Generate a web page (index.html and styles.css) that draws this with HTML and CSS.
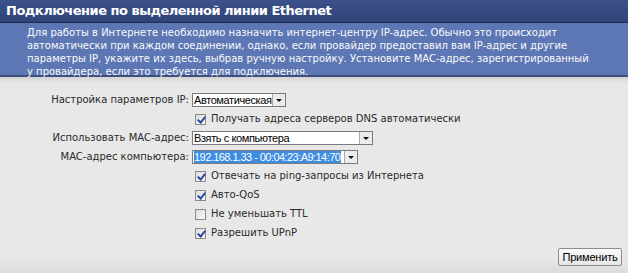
FILE: index.html
```html
<!DOCTYPE html>
<html lang="ru">
<head>
    <meta charset="UTF-8">
    <title>Ethernet</title>
    <link rel="stylesheet" href="styles.css">
</head>
<body>
    <!-- Заголовок страницы -->
    <div class="cabecalho">
        <h1>Подключение по выделенной линии Ethernet</h1>
    </div>

    <!-- Описание -->
    <div class="descricao">
        <p>Для работы в Интернете необходимо назначить интернет-центру IP-адрес. Обычно это происходит<br>
        автоматически при каждом соединении, однако, если провайдер предоставил вам IP-адрес и другие<br>
        параметры IP, укажите их здесь, выбрав ручную настройку. Установите MAC-адрес, зарегистрированный<br>
        у провайдера, если это требуется для подключения.</p>
    </div>

    <!-- Форма настроек -->
    <div class="conteudo">
        <div class="formulario">
            <label class="rotulo">Настройка параметров IP:</label>
            <div class="campo">
                <span class="seletor seletor-ip"><span class="valor">Автоматическая</span><span class="seta"></span></span>
            </div>

            <span></span>
            <label class="opcao"><span class="caixa marcada"></span>Получать адреса серверов DNS автоматически</label>

            <label class="rotulo">Использовать MAC-адрес:</label>
            <div class="campo">
                <span class="seletor seletor-mac"><span class="valor">Взять с компьютера</span><span class="seta"></span></span>
            </div>

            <label class="rotulo">MAC-адрес компьютера:</label>
            <div class="campo">
                <span class="seletor seletor-pc"><span class="valor"><span class="selecionado">192.168.1.33 - 00:04:23:A9:14:70</span></span><span class="seta"></span></span>
            </div>

            <span></span>
            <label class="opcao"><span class="caixa marcada"></span>Отвечать на ping-запросы из Интернета</label>
            <span></span>
            <label class="opcao"><span class="caixa marcada"></span>Авто-QoS</label>
            <span></span>
            <label class="opcao"><span class="caixa"></span>Не уменьшать TTL</label>
            <span></span>
            <label class="opcao"><span class="caixa marcada"></span>Разрешить UPnP</label>
        </div>

        <div class="rodape">
            <button class="botao">Применить</button>
        </div>
    </div>
</body>
</html>
```

FILE: styles.css
```css
/* Базовые настройки */
* {
  margin: 0;
  padding: 0;
  box-sizing: border-box;
}

body {
  width: 628px;
  height: 273px;
  overflow: hidden;
  font-family: 'DejaVu Sans', Verdana, sans-serif;
  font-size: 10px;
  color: #2a2a2a;
  background: #e8e8e8;
}

.cabecalho {
  height: 23px;
  background: linear-gradient(to bottom, #3d528b, #2f4378);
  padding-left: 6px;
  border-bottom: 1px solid #1f2d55;
}

.cabecalho h1 {
  font-size: 13px;
  font-weight: bold;
  color: #fff;
  line-height: 22px;
  letter-spacing: -0.5px;
}

.descricao {
  background: #5d77b4;
  color: #fafafa;
  padding: 3px 10px 3px 27px;
  line-height: 13px;
  border-bottom: 2px solid #3c4f7e;
  height: 54px;
  white-space: nowrap;
}

.conteudo {
  background: linear-gradient(to bottom, #d2d2d2, #e8e8e8 6px, #e8e8e8 92%, #dcdcdc);
  height: 196px;
  padding-top: 16px;
}

.formulario {
  display: grid;
  grid-template-columns: 189px 1fr;
  column-gap: 3px;
  row-gap: 5px;
  align-items: center;
}

.rotulo {
  text-align: right;
  line-height: 14px;
}

.campo {
  height: 14px;
  display: flex;
}

.seletor {
  display: flex;
  height: 14px;
  background: #fff;
  border: 1px solid #7a7a7a;
  font-family: 'Liberation Sans', Arial, sans-serif;
  font-size: 11px;
  letter-spacing: -0.4px;
  color: #000;
}

.seletor-ip { width: 94px; }
.seletor-mac { width: 181px; }
.seletor-pc { width: 166px; }

.valor {
  flex: 1;
  line-height: 12px;
  padding-left: 1px;
  white-space: nowrap;
  overflow: hidden;
}

.selecionado {
  display: inline-block;
  background: #3d8ee0;
  color: #fff;
  letter-spacing: -0.55px;
  padding-right: 1px;
}

.seta {
  width: 13px;
  border-left: 1px solid #aaa;
  background: #ececec;
  position: relative;
}

.seta::after {
  content: "";
  position: absolute;
  left: 3px;
  top: 5px;
  border-left: 3px solid transparent;
  border-right: 3px solid transparent;
  border-top: 3px solid #111;
}

.opcao {
  display: flex;
  align-items: center;
  line-height: 14px;
  padding-left: 3px;
}

.caixa {
  width: 11px;
  height: 11px;
  border: 1px solid #8a8a8a;
  background: linear-gradient(to bottom right, #dcdcdc, #fafafa);
  margin-right: 5px;
  position: relative;
}

.caixa.marcada::after {
  content: "";
  position: absolute;
  left: 3px;
  top: 0px;
  width: 3px;
  height: 6px;
  border-right: 2px solid #2a46a0;
  border-bottom: 2px solid #2a46a0;
  transform: rotate(40deg);
}

.rodape {
  display: flex;
  justify-content: flex-end;
  padding: 8px 6px 0 0;
}

.botao {
  font-family: 'Liberation Sans', Arial, sans-serif;
  font-size: 11px;
  letter-spacing: -0.2px;
  color: #000;
  height: 18px;
  width: 64px;
  background: linear-gradient(to bottom, #fafafa, #e6e6e6);
  border: 1px solid #8c8c8c;
  border-radius: 2px;
}
```
